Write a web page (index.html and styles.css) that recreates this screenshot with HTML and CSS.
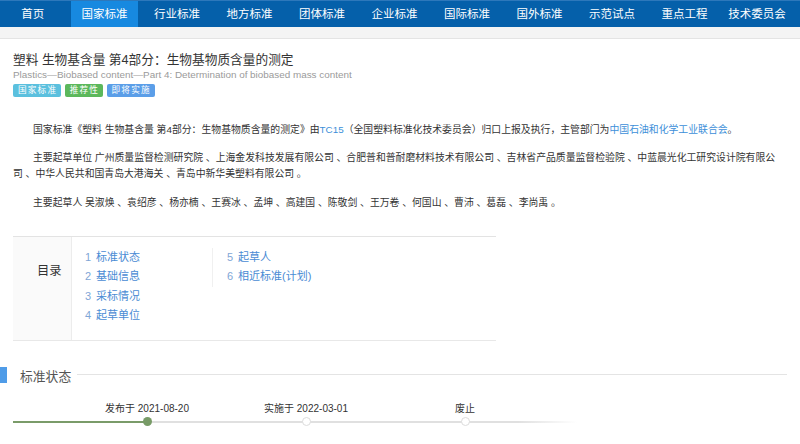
FILE: index.html
```html
<!DOCTYPE html>
<html lang="zh-CN">
<head>
<meta charset="utf-8">
<title>塑料 生物基含量 第4部分：生物基物质含量的测定</title>
<link rel="stylesheet" href="styles.css">
</head>
<body>
<nav class="topnav">
  <a class="nav-item nav-home">首页</a>
  <a class="nav-item active">国家标准</a>
  <a class="nav-item">行业标准</a>
  <a class="nav-item">地方标准</a>
  <a class="nav-item">团体标准</a>
  <a class="nav-item">企业标准</a>
  <a class="nav-item">国际标准</a>
  <a class="nav-item">国外标准</a>
  <a class="nav-item">示范试点</a>
  <a class="nav-item">重点工程</a>
  <a class="nav-item">技术委员会</a>
</nav>
<div class="subbar"></div>

<main class="content">
  <h1 class="title">塑料 生物基含量 第4部分：生物基物质含量的测定</h1>
  <div class="en-title">Plastics—Biobased content—Part 4: Determination of biobased mass content</div>
  <div class="badges">
    <span class="badge badge-cyan">国家标准</span>
    <span class="badge badge-green">推荐性</span>
    <span class="badge badge-blue">即将实施</span>
  </div>

  <p class="para">国家标准《塑料 生物基含量 第4部分：生物基物质含量的测定》由<a class="link">TC15</a>（全国塑料标准化技术委员会）归口上报及执行，主管部门为<a class="link">中国石油和化学工业联合会</a>。</p>
  <p class="para">主要起草单位 广州质量监督检测研究院 、上海金发科技发展有限公司 、合肥普和普耐磨材料技术有限公司 、吉林省产品质量监督检验院 、中蓝晨光化工研究设计院有限公司 、中华人民共和国青岛大港海关 、青岛中新华美塑料有限公司 。</p>
  <p class="para">主要起草人 吴淑焕 、袁绍彦 、杨亦楠 、王赛冰 、孟坤 、高建国 、陈敬剑 、王万卷 、何国山 、曹沛 、葛磊 、李尚禹 。</p>

  <div class="toc">
    <div class="toc-label">目录</div>
    <div class="toc-body">
      <ul class="toc-col toc-col-first">
        <li><span class="toc-num">1</span><a class="toc-link">标准状态</a></li>
        <li><span class="toc-num">2</span><a class="toc-link">基础信息</a></li>
        <li><span class="toc-num">3</span><a class="toc-link">采标情况</a></li>
        <li><span class="toc-num">4</span><a class="toc-link">起草单位</a></li>
      </ul>
      <ul class="toc-col toc-col-second">
        <li><span class="toc-num">5</span><a class="toc-link">起草人</a></li>
        <li><span class="toc-num">6</span><a class="toc-link">相近标准(计划)</a></li>
      </ul>
    </div>
  </div>
</main>

<section class="status">
  <div class="section-head">
    <span class="section-bar"></span>
    <h2 class="section-title">标准状态</h2>
    <span class="section-rule"></span>
  </div>
  <div class="timeline">
    <div class="tl-labels">
      <div class="tl-label">发布于 2021-08-20</div>
      <div class="tl-label">实施于 2022-03-01</div>
      <div class="tl-label">废止</div>
    </div>
    <div class="tl-track">
      <div class="tl-node"><span class="dot dot-done"></span></div>
      <div class="tl-node"><span class="dot"></span></div>
      <div class="tl-node"><span class="dot"></span></div>
    </div>
  </div>
</section>
</body>
</html>
```
FILE: styles.css
```css
html, body {
  margin: 0;
  padding: 0;
  background: #ffffff;
}
body {
  font-family: "Liberation Sans", "Noto Sans CJK SC", sans-serif;
  color: #333333;
  width: 800px;
  overflow: hidden;
}

/* top navigation */
.topnav {
  display: flex;
  gap: 5.5px;
  height: 26px;
  background: #0560aa;
  border-top: 1px solid #2d78bb;
}
.nav-item {
  width: 67px;
  flex: none;
  text-align: center;
  color: #ffffff;
  font-size: 11.5px;
  line-height: 26px;
  text-decoration: none;
}
.nav-home {
  width: 65.5px;
}
.nav-item.active {
  background: #1789e0;
}
.subbar {
  height: 11px;
  background: #f4f4f4;
  border-bottom: 1px solid #e4e4e4;
}

/* main content */
.content {
  width: 770px;
  padding: 0 17px 0 13px;
}
.title {
  margin: 13px 0 0;
  font-size: 12.7px;
  line-height: 16px;
  font-weight: normal;
  color: #333333;
}
.en-title {
  font-size: 9.9px;
  line-height: 13px;
  color: #9a9a9a;
}
.badges {
  display: flex;
  gap: 3.5px;
  margin-top: 3px;
}
.badge {
  display: inline-block;
  height: 13px;
  line-height: 13px;
  padding: 0 4px 0 5px;
  font-size: 8.6px;
  letter-spacing: 1.2px;
  color: #ffffff;
  border-radius: 2px;
}
.badge-cyan { background: #5bc0de; }
.badge-green { background: #5cb85c; }
.badge-blue { background: #5b9ee8; }

.para {
  margin: 0;
  font-size: 9.86px;
  line-height: 16px;
  text-indent: 20px;
  color: #333333;
}
.para + .para {
  margin-top: 12.5px;
}
.badges + .para {
  margin-top: 24.5px;
}
.link {
  color: #3d8fd9;
  text-decoration: none;
}

/* table of contents */
.toc {
  display: flex;
  width: 483px;
  margin-top: 25px;
  border-top: 1px solid #e3e3e3;
  border-bottom: 1px solid #e8e8e8;
}
.toc-label {
  width: 59px;
  flex: none;
  box-sizing: border-box;
  padding-top: 24px;
  padding-left: 24px;
  background: #fafafa;
  border-right: 1px solid #ececec;
  font-size: 12.3px;
  line-height: 20px;
  color: #333333;
  height: 103px;
}
.toc-body {
  display: flex;
  align-items: flex-start;
  padding: 11px 0 0 13px;
}
.toc-col {
  list-style: none;
  margin: 0;
  padding: 0;
}
.toc-col-first {
  width: 127px;
}
.toc-col-second {
  border-left: 1px solid #f0f0f0;
  padding-left: 14px;
}
.toc-col li {
  font-size: 11px;
  line-height: 19.5px;
  white-space: nowrap;
}
.toc-num {
  display: inline-block;
  width: 11px;
  color: #7fa6d6;
}
.toc-link {
  color: #4a8bd4;
  text-decoration: none;
}

/* status section */
.status {
  margin-top: 26px;
}
.section-head {
  display: flex;
  align-items: center;
  width: 787px;
  height: 16px;
}
.section-bar {
  width: 7px;
  height: 16px;
  background: #4f9ce8;
  flex: none;
}
.section-title {
  margin: 0 0 0 13px;
  font-size: 12.8px;
  line-height: 16px;
  font-weight: normal;
  color: #555555;
  position: relative;
  top: 2px;
}
.section-rule {
  flex: 1;
  height: 1px;
  margin-left: 6px;
  background: #e4e4e4;
}

.timeline {
  width: 564px;
  margin: 19px 0 0 13px;
}
.tl-labels,
.tl-track {
  display: flex;
  padding-left: 54px;
}
.tl-label {
  width: 160px;
  text-align: center;
  font-size: 10px;
  line-height: 13px;
  color: #333333;
}
.tl-label:nth-child(2) { width: 158px; }
.tl-track {
  margin-top: 2.5px;
  height: 9px;
  align-items: center;
  background:
    linear-gradient(to right, #7a9b69 0, #7a9b69 134px, #e0e0e0 134px, #e0e0e0 505px, rgba(224,224,224,0) 564px)
    no-repeat left center / 100% 2px;
}
.tl-node {
  width: 160px;
  display: flex;
  justify-content: center;
}
.tl-node:nth-child(2) { width: 158px; }
.dot {
  width: 7px;
  height: 7px;
  border-radius: 50%;
  background: #ffffff;
  border: 1px solid #dcdcdc;
  box-sizing: content-box;
}
.dot.dot-done {
  width: 9px;
  height: 9px;
  border: none;
  background: #789b67;
}
```
